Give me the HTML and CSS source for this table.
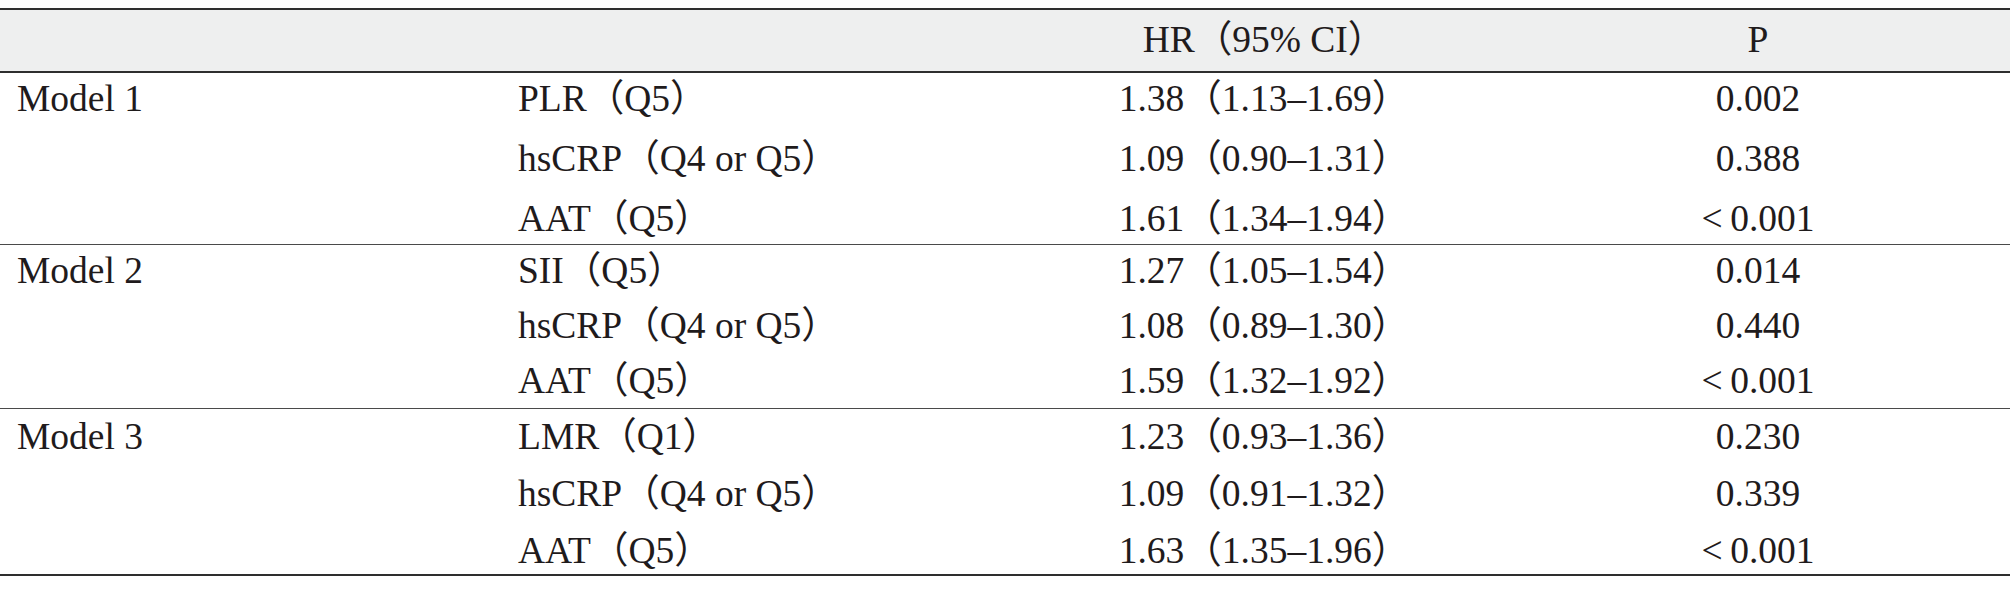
FILE: index.html
```html
<!DOCTYPE html>
<html lang="en">
<head>
<meta charset="utf-8">
<title>Hazard ratios</title>
<link rel="stylesheet" href="styles.css">
</head>
<body>
<table class="hr-table">
  <colgroup>
    <col class="c-model">
    <col class="c-var">
    <col class="c-hr">
    <col class="c-p">
  </colgroup>
  <thead>
    <tr>
      <th class="cell-left"></th>
      <th class="cell-var"></th>
      <th class="cell-hr">HR（95% CI）</th>
      <th class="cell-center">P</th>
    </tr>
  </thead>
  <tbody class="g1">
    <tr>
      <td class="cell-left">Model 1</td>
      <td class="cell-var">PLR（Q5）</td>
      <td class="cell-hr">1.38（1.13–1.69）</td>
      <td class="cell-center">0.002</td>
    </tr>
    <tr>
      <td class="cell-left"></td>
      <td class="cell-var">hsCRP（Q4 or Q5）</td>
      <td class="cell-hr">1.09（0.90–1.31）</td>
      <td class="cell-center">0.388</td>
    </tr>
    <tr>
      <td class="cell-left"></td>
      <td class="cell-var">AAT（Q5）</td>
      <td class="cell-hr">1.61（1.34–1.94）</td>
      <td class="cell-center">&lt;&#8201;0.001</td>
    </tr>
  </tbody>
  <tbody class="g2">
    <tr>
      <td class="cell-left">Model 2</td>
      <td class="cell-var">SII（Q5）</td>
      <td class="cell-hr">1.27（1.05–1.54）</td>
      <td class="cell-center">0.014</td>
    </tr>
    <tr>
      <td class="cell-left"></td>
      <td class="cell-var">hsCRP（Q4 or Q5）</td>
      <td class="cell-hr">1.08（0.89–1.30）</td>
      <td class="cell-center">0.440</td>
    </tr>
    <tr>
      <td class="cell-left"></td>
      <td class="cell-var">AAT（Q5）</td>
      <td class="cell-hr">1.59（1.32–1.92）</td>
      <td class="cell-center">&lt;&#8201;0.001</td>
    </tr>
  </tbody>
  <tbody class="g3">
    <tr>
      <td class="cell-left">Model 3</td>
      <td class="cell-var">LMR（Q1）</td>
      <td class="cell-hr">1.23（0.93–1.36）</td>
      <td class="cell-center">0.230</td>
    </tr>
    <tr>
      <td class="cell-left"></td>
      <td class="cell-var">hsCRP（Q4 or Q5）</td>
      <td class="cell-hr">1.09（0.91–1.32）</td>
      <td class="cell-center">0.339</td>
    </tr>
    <tr>
      <td class="cell-left"></td>
      <td class="cell-var">AAT（Q5）</td>
      <td class="cell-hr">1.63（1.35–1.96）</td>
      <td class="cell-center">&lt;&#8201;0.001</td>
    </tr>
  </tbody>
</table>
</body>
</html>
```

FILE: styles.css
```css
html, body {
  margin: 0;
  padding: 0;
  background: #ffffff;
}

body {
  font-family: "Liberation Serif", "Noto Sans CJK SC", serif;
  color: #1f1b1c;
}

.hr-table {
  margin-top: 8px;
  width: 2010px;
  table-layout: fixed;
  border-collapse: separate;
  border-spacing: 0;
  font-size: 37.5px;
  line-height: 42px;
}

.c-model { width: 500px; }
.c-var { width: 500px; }
.c-hr { width: 506px; }
.c-p { width: 504px; }

.hr-table th,
.hr-table td {
  font-weight: normal;
  white-space: nowrap;
  vertical-align: top;
  padding: 5px 0 8px 0;
}

.hr-table th {
  background: #eeefef;
  border-top: 2px solid #2e2e2e;
  border-bottom: 2px solid #2e2e2e;
  padding-top: 9px;
  padding-bottom: 10px;
}

.cell-left { text-align: left; padding-left: 17px !important; }
.cell-var { text-align: left; padding-left: 18px !important; }
.cell-hr { text-align: center; padding-left: 22px !important; }
.cell-center { text-align: center; }

/* group separators */
.g2 tr:first-child td,
.g3 tr:first-child td {
  border-top: 1px solid #4a4a4a;
}

.g3 tr:last-child td {
  border-bottom: 2px solid #2e2e2e;
}

/* group 1: looser rows */
.g1 td { padding-bottom: 13px; }
.g1 tr:last-child td { padding-bottom: 4px; }

/* group 2 */
.g2 td { padding-bottom: 8px; }
.g2 tr:last-child td { padding-bottom: 6px; }

/* group 3 */
.g3 td { padding-top: 7px; padding-bottom: 8px; }
.g3 tr:last-child td { padding-bottom: 2px; }
```
